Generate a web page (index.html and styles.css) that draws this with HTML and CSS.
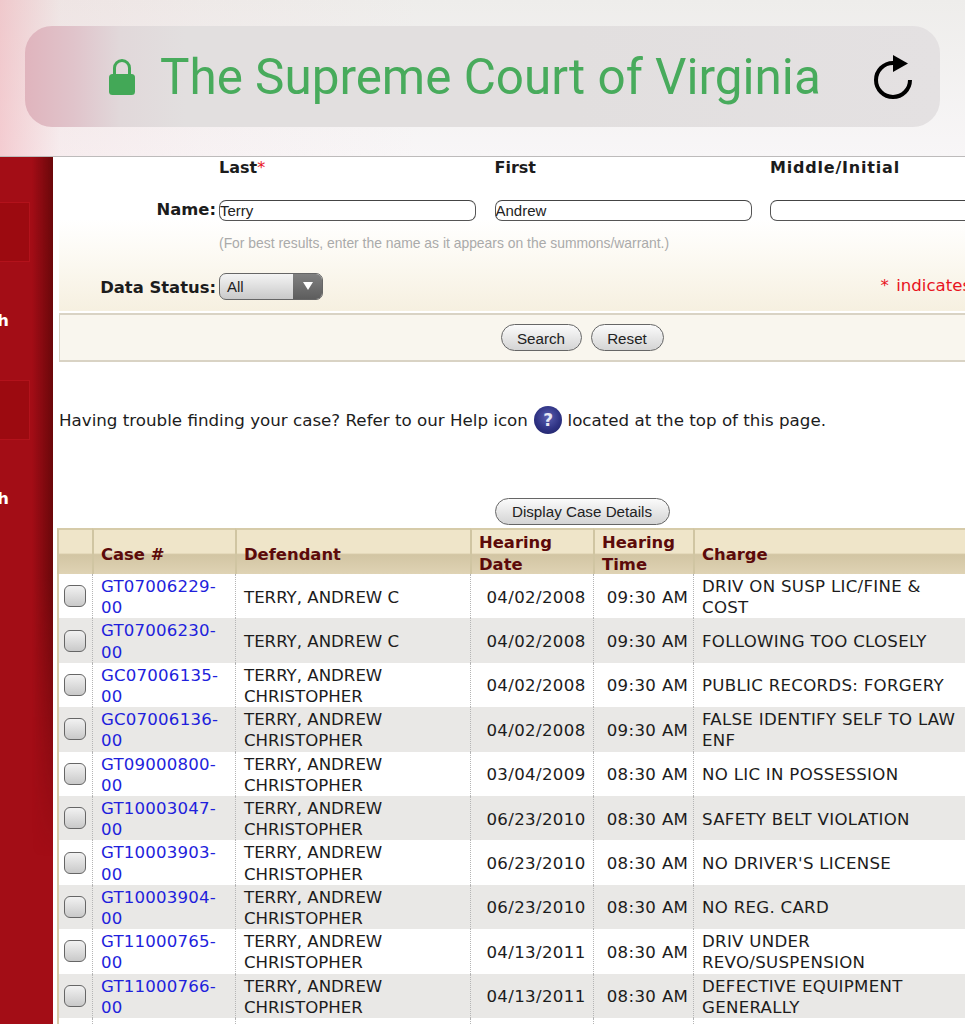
FILE: index.html
```html
<!DOCTYPE html>
<html lang="en">
<head>
<meta charset="utf-8">
<title>The Supreme Court of Virginia</title>
<link rel="stylesheet" href="styles.css">
</head>
<body>
<header class="topbar">
  <div class="urlpill">
    <svg class="lock" viewBox="0 0 26 37" aria-hidden="true">
      <path d="M5.5 17V10a7.5 7.5 0 0 1 15 0V17" fill="none" stroke="#43a857" stroke-width="3"/>
      <rect x="0" y="16" width="26" height="21" rx="3.5" fill="#43a857"/>
    </svg>
    <span class="urltext">The Supreme Court of Virginia</span>
    <svg class="reload" viewBox="0 0 38 45" aria-hidden="true">
      <path d="M19 8A17 17 0 1 0 36 25" fill="none" stroke="#000" stroke-width="4"/>
      <path d="M19 0L34 8.500L19 17Z" fill="#000"/>
    </svg>
  </div>
</header>
<div class="page">
  <aside class="sidebar">
    <div class="navbox"></div><div class="navlabel">Search</div>
    <div class="navbox"></div><div class="navlabel">Search</div>
  </aside>
  <main class="content">
    <section class="formarea">
      <div class="namegrid">
        <span></span>
        <b class="collabel">Last<i class="req">*</i></b>
        <b class="collabel">First</b>
        <b class="collabel wide">Middle/Initial</b>
        <label class="rowlabel">Name:</label>
        <div class="textfield">Terry</div>
        <div class="textfield">Andrew</div>
        <div class="textfield"></div>
        <span></span>
        <div class="hint">(For best results, enter the name as it appears on the summons/warrant.)</div>
      </div>
      <div class="statusrow">
        <label class="rowlabel">Data Status:</label>
        <div class="select"><span class="selectvalue">All</span><span class="selectarrow"></span></div>
        <span class="required">* indicates required field</span>
      </div>
    </section>
    <section class="buttonpanel">
      <button class="pill search">Search</button>
      <button class="pill reset">Reset</button>
    </section>
    <p class="helpline">Having trouble finding your case? Refer to our Help icon <span class="helpicon">?</span> located at the top of this page.</p>
    <div class="details"><button class="pill detailsbtn">Display Case Details</button></div>
    <table class="cases">
      <colgroup>
        <col class="c-check"><col class="c-case"><col class="c-def"><col class="c-date"><col class="c-time"><col class="c-charge">
      </colgroup>
      <thead>
        <tr><th></th><th>Case #</th><th>Defendant</th><th class="two"><div class="thtwo">Hearing Date</div></th><th class="two"><div class="thtwo">Hearing Time</div></th><th>Charge</th></tr>
      </thead>
      <tbody>
        <tr><td class="ck"><span class="box"></span></td><td><a>GT07006229-00</a></td><td>TERRY, ANDREW C</td><td class="mid">04/02/2008</td><td class="mid">09:30 AM</td><td class="chg">DRIV ON SUSP LIC/FINE &amp; COST</td></tr>
        <tr><td class="ck"><span class="box"></span></td><td><a>GT07006230-00</a></td><td>TERRY, ANDREW C</td><td class="mid">04/02/2008</td><td class="mid">09:30 AM</td><td class="chg">FOLLOWING TOO CLOSELY</td></tr>
        <tr><td class="ck"><span class="box"></span></td><td><a>GC07006135-00</a></td><td>TERRY, ANDREW CHRISTOPHER</td><td class="mid">04/02/2008</td><td class="mid">09:30 AM</td><td class="chg">PUBLIC RECORDS: FORGERY</td></tr>
        <tr><td class="ck"><span class="box"></span></td><td><a>GC07006136-00</a></td><td>TERRY, ANDREW CHRISTOPHER</td><td class="mid">04/02/2008</td><td class="mid">09:30 AM</td><td class="chg">FALSE IDENTIFY SELF TO LAW ENF</td></tr>
        <tr><td class="ck"><span class="box"></span></td><td><a>GT09000800-00</a></td><td>TERRY, ANDREW CHRISTOPHER</td><td class="mid">03/04/2009</td><td class="mid">08:30 AM</td><td class="chg">NO LIC IN POSSESSION</td></tr>
        <tr><td class="ck"><span class="box"></span></td><td><a>GT10003047-00</a></td><td>TERRY, ANDREW CHRISTOPHER</td><td class="mid">06/23/2010</td><td class="mid">08:30 AM</td><td class="chg">SAFETY BELT VIOLATION</td></tr>
        <tr><td class="ck"><span class="box"></span></td><td><a>GT10003903-00</a></td><td>TERRY, ANDREW CHRISTOPHER</td><td class="mid">06/23/2010</td><td class="mid">08:30 AM</td><td class="chg">NO DRIVER'S LICENSE</td></tr>
        <tr><td class="ck"><span class="box"></span></td><td><a>GT10003904-00</a></td><td>TERRY, ANDREW CHRISTOPHER</td><td class="mid">06/23/2010</td><td class="mid">08:30 AM</td><td class="chg">NO REG. CARD</td></tr>
        <tr><td class="ck"><span class="box"></span></td><td><a>GT11000765-00</a></td><td>TERRY, ANDREW CHRISTOPHER</td><td class="mid">04/13/2011</td><td class="mid">08:30 AM</td><td class="chg">DRIV UNDER REVO/SUSPENSION</td></tr>
        <tr><td class="ck"><span class="box"></span></td><td><a>GT11000766-00</a></td><td>TERRY, ANDREW CHRISTOPHER</td><td class="mid">04/13/2011</td><td class="mid">08:30 AM</td><td class="chg">DEFECTIVE EQUIPMENT GENERALLY</td></tr>
        <tr><td class="ck"></td><td></td><td></td><td></td><td></td><td></td></tr>
      </tbody>
    </table>
  </main>
</div>
</body>
</html>
```
FILE: styles.css
```css
* { box-sizing: border-box; }
html, body { margin: 0; height: 1024px; overflow: hidden; background: #fff; }
body { font-family: "DejaVu Sans", Verdana, sans-serif; font-size: 16.6px; color: #1c1c1c; }

.topbar {
  height: 157px;
  padding: 26px 25px 0;
  border-bottom: 1px solid #bdbbbb;
  background:
    linear-gradient(to right, rgba(240,170,178,.55), rgba(240,190,195,.18) 60px, rgba(240,190,195,.08) 200px, rgba(255,255,255,0) 420px),
    linear-gradient(#eeedeb, #f8f6f7);
}
.urlpill {
  height: 101px;
  border-radius: 27px;
  display: flex;
  align-items: center;
  padding-left: 84px;
  background: linear-gradient(to right, #e0b4bd, #e0c4cb 50px, #e1d8da 95px, #e2dfdf 160px, #e2dfdf 60%, #e4e1e2);
}
.lock { width: 26px; height: 37px; margin-right: 25px; }
.urltext { font-family: Roboto, "Liberation Sans", sans-serif; font-weight: 400; font-size: 49.4px; color: #48ab5c; white-space: nowrap; width: 659px; }
.reload { width: 38px; height: 45px; margin-left: 55px; margin-top: 2px; }

.page { display: flex; height: 867px; }
.sidebar {
  position: relative;
  flex: 0 0 53px;
  background: #a30d16;
  padding-top: 45px;
  overflow: hidden;
}
.sidebar::after {
  content: "";
  position: absolute;
  inset: 0;
  background: linear-gradient(to right, transparent 32px, #6a080b 53px);
  -webkit-mask-image: linear-gradient(#000 0, #000 420px, transparent 700px);
  mask-image: linear-gradient(#000 0, #000 420px, transparent 700px);
}
.navbox {
  width: 30px; height: 60px; margin-bottom: 48px;
  background: #9c0a10;
  border: 1px solid #b3121b;
  border-left: 0;
}
.navlabel {
  height: 70px; color: #fff; font-weight: bold; font-size: 16.4px; line-height: 22px;
  margin-left: -55px; width: 64px; white-space: nowrap; text-align: right;
}
.content { flex: 0 0 1060px; padding-left: 6px; }

.formarea {
  width: 1046px;
  height: 154px;
  background: linear-gradient(#fff 0, #fff 62px, #fdfbf6 90px, #f6f0e0 100%);
}
.namegrid {
  display: grid;
  grid-template-columns: 141.5px 257px 257px 335px;
  column-gap: 18.5px;
  align-items: center;
}
.namegrid > .rowlabel { margin-right: -18.5px; }
.collabel { height: 20px; line-height: 20px; font-size: 16px; margin-top: 1px; margin-bottom: 21px; }
.wide { letter-spacing: .8px; }
.req { color: #e8141e; font-style: normal; font-weight: normal; }
.rowlabel { font-weight: bold; font-size: 16.4px; text-align: right; padding-right: 3px; line-height: 22px; }
.textfield {
  height: 21px;
  border: 1.5px solid #555;
  border-top-color: #444;
  border-radius: 7px;
  background: #fff;
  font-family: "Liberation Sans", Arial, sans-serif;
  font-size: 15px;
  line-height: 20px;
  padding-left: 0;
  color: #222;
}
.hint {
  grid-column: 2 / span 3;
  font-family: "Liberation Sans", Arial, sans-serif;
  font-size: 13.9px;
  line-height: 16px;
  color: #aaa;
  margin-top: 14px;
}
.statusrow { display: flex; align-items: center; margin-top: 21px; height: 28px; }
.statusrow .rowlabel { width: 160px; padding-top: 3px; }
.select {
  width: 104px; height: 27px;
  display: flex;
  border: 1px solid #666;
  border-radius: 7px;
  overflow: hidden;
  background: linear-gradient(#f4f4f4, #c9c9c9);
}
.selectvalue { flex: 1; font-family: "Liberation Sans", Arial, sans-serif; font-size: 15px; line-height: 26px; padding-left: 7px; color: #222; }
.selectarrow {
  width: 29px;
  background: linear-gradient(#808080, #5d5d5d);
  display: flex; align-items: center; justify-content: center;
}
.selectarrow::before {
  content: "";
  width: 0; height: 0;
  border-left: 5px solid transparent;
  border-right: 5px solid transparent;
  border-top: 8px solid #fff;
}
.required { margin-left: auto; margin-right: 14px; color: #e8141e; font-size: 16.6px; white-space: nowrap; word-spacing: 2px; padding-bottom: 2px; }

.buttonpanel {
  width: 1046px;
  height: 49px;
  margin-top: 2px;
  display: flex;
  justify-content: center;
  align-items: center;
  gap: 9px;
  background: #f9f6ee;
  border: 2px solid #d9d3c4;
  border-width: 2px 1px;
}
.pill {
  height: 27px;
  border: 1px solid #666;
  border-radius: 14px;
  background: linear-gradient(#fbfbfb, #d4d4d4);
  font-family: "Liberation Sans", Arial, sans-serif;
  font-size: 15.2px;
  color: #222;
  padding: 1px 0 0;
}
.search { width: 81px; }
.reset { width: 73px; }

.helpline { width: 1046px; margin: 44px 0 0; line-height: 28px; height: 28px; font-size: 16.7px; white-space: nowrap; }
.helpicon {
  display: inline-block;
  width: 28px; height: 28px;
  margin-left: 1px;
  border-radius: 50%;
  background: radial-gradient(circle at 50% 40%, #5a5fb0, #2f3384 55%, #1c1f60);
  color: #e8e8f4;
  font-weight: bold;
  font-size: 17px;
  line-height: 28px;
  text-align: center;
  vertical-align: top;
}
.details { width: 1046px; margin-top: 64px; height: 30px; display: flex; justify-content: center; }
.detailsbtn { width: 175px; padding-top: 0; }

.cases {
  margin-left: -2px;
  width: 1050px;
  table-layout: fixed;
  border-collapse: separate;
  border-spacing: 0;
  line-height: 21.2px;
}
.c-check { width: 35px; }
.c-case { width: 143px; }
.c-def { width: 235px; }
.c-date { width: 123px; }
.c-time { width: 100px; }
.c-charge { width: 414px; }
th {
  height: 46px;
  padding: 5px 7px 0;
  text-align: left;
  color: #5c0a0a;
  font-size: 16.4px;
  line-height: 22px;
  vertical-align: middle;
  border-top: 2px solid #d6cba9;
  border-left: 2px solid #d0c5a2;
  background: linear-gradient(#efe5c9 0, #efe5c9 52%, #d2c5a3 56%, #dfd3b4 100%);
}
th.two { vertical-align: top; padding-top: 2px; }
.thtwo { height: 41px; }
td {
  height: 44.4px;
  padding: 2px 8px 0 8px;
  border-left: 1px dotted #b5b5b5;
  vertical-align: middle;
}
td:first-child { border-left: 2px solid #d6cba9; }
tbody tr:nth-child(even) td { background: #e9e8e6; }
td a { color: #1f1fdc; letter-spacing: .2px; }
.mid { text-align: center; padding: 2px 0 0 8px; letter-spacing: .35px; }
.chg { padding-right: 137px; letter-spacing: .3px; }
td.ck { padding: 0 0 0 5px; }
.box {
  display: block;
  width: 22px; height: 22px;
  border: 1.5px solid #666;
  border-radius: 6px;
  background: linear-gradient(#f2f2f2, #c9c9c9);
}
```
